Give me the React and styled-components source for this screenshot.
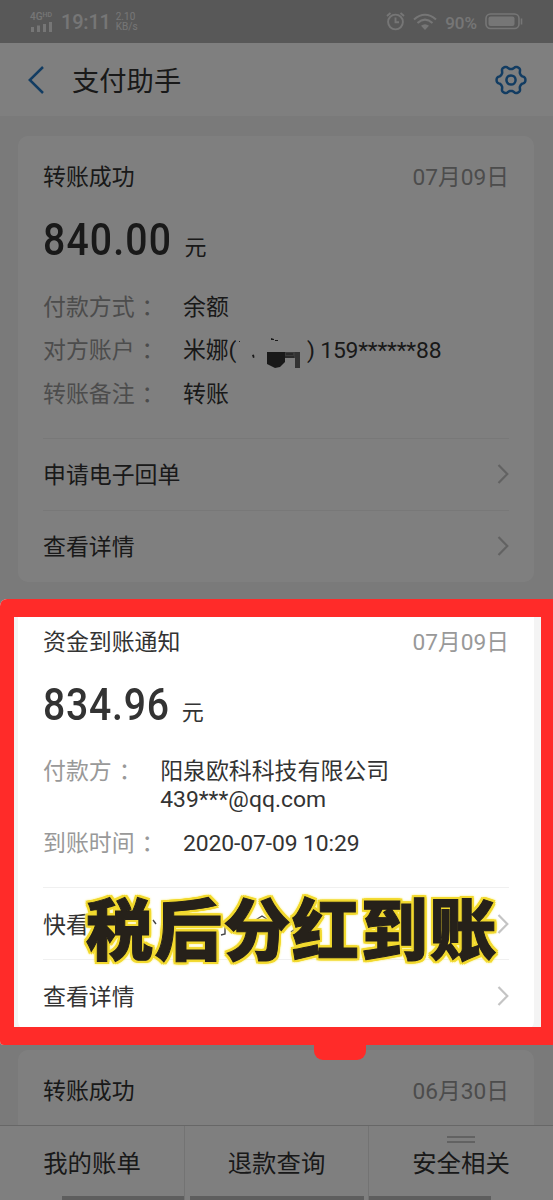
import React from "react";
import styled, { createGlobalStyle } from "styled-components";

const Global = createGlobalStyle`
  * { box-sizing: border-box; }
  body { margin: 0; background: #f4f4f4; }
`;

const Screen = styled.div`
  position: relative;
  width: 553px;
  height: 1200px;
  overflow: hidden;
  display: flex;
  flex-direction: column;
  background: #f4f4f4;
  color: #333;
  font-family: Roboto, "Noto Sans CJK SC", sans-serif;
  font-size: 22.9px;
  line-height: 28px;
`;

const StatusBar = styled.div`
  flex: none;
  height: 43px;
  padding: 0 30px;
  display: flex;
  align-items: center;
  justify-content: space-between;
  background: #b0b0b0;
  color: #ececec;
`;

const StatusGroup = styled.div`
  display: flex;
  align-items: center;
  gap: ${(p) => p.$gap}px;
`;

const Clock = styled.span`
  font-size: 20px;
  font-weight: 500;
  letter-spacing: -0.2px;
  padding-top: 1px;
`;

const Speed = styled.span`
  margin-left: -2px;
  font-size: 10px;
  line-height: 10px;
  white-space: pre;
`;

const Network = styled.span`
  display: flex;
  flex-direction: column;
  gap: 1px;
  font-size: 10px;
  line-height: 9px;
  font-weight: 500;
  sup { font-size: 7px; line-height: 0; vertical-align: 3px; }
`;

const Percent = styled.span`
  font-size: 17px;
  font-weight: 500;
  padding-top: 2px;
`;

const Header = styled.header`
  flex: none;
  height: 73px;
  padding: 0 26px 0 28px;
  display: flex;
  align-items: center;
  background: #fff;
`;

const HeaderTitle = styled.h1`
  flex: 1;
  margin: 0 0 0 28px;
  font-size: 27.3px;
  font-weight: 400;
  padding-top: 4px;
`;

const Feed = styled.main`
  flex: 1;
  min-height: 0;
  overflow: hidden;
  padding: 20px 19px 0 18px;
  display: flex;
  flex-direction: column;
  gap: 19px;
`;

const CardBox = styled.section`
  flex: none;
  min-height: 110px;
  padding: 22px 25px 0;
  background: #fff;
  border-radius: 10px;
`;

const CardHead = styled.div`
  display: flex;
  justify-content: space-between;
  height: 40px;
  line-height: 40px;
`;

const DateText = styled.span`
  color: #999;
  font-size: 22.7px;
`;

const Amount = styled.div`
  display: flex;
  align-items: baseline;
  height: 87px;
  line-height: 85px;
`;

const Figure = styled.span`
  font-size: 43.5px;
  font-weight: 500;
  letter-spacing: ${(p) => p.$tracking}px;
  transform: scaleX(0.9);
  transform-origin: left;
`;

const Unit = styled.span`
  margin-left: -2px;
  font-size: 22px;
`;

const Details = styled.div`
  display: flex;
  flex-direction: column;
  gap: 15.7px;
  padding: 8.5px 0 29.1px;
`;

const Detail = styled.div`
  display: flex;
`;

const Label = styled.span`
  color: #999;
  white-space: nowrap;
`;

const Colon = styled.span`
  display: inline-block;
  width: 48.5px;
  padding-left: 7px;
`;

const Value = styled.span`
  white-space: pre-line;
  display: flex;
  letter-spacing: ${(p) => p.$tracking}px;
`;

const LinkRow = styled.div`
  display: flex;
  align-items: center;
  justify-content: space-between;
  height: 72px;
  border-top: 1px solid #f0f0f0;
`;

const LinkText = styled.span`
  display: flex;
  align-items: center;
  padding-top: 4px;
`;

const TabBar = styled.nav`
  flex: none;
  height: 75px;
  display: grid;
  grid-template-columns: 184px 184px 185px;
  background: #fff;
  border-top: 1px solid #cfcfcf;
`;

const Tab = styled.div`
  position: relative;
  display: flex;
  flex-direction: column;
  align-items: center;
  justify-content: space-between;
  font-size: 24.4px;
  line-height: 75px;
  border-left: ${(p) => (p.$first ? "0" : "1px solid #e6e6e6")};
`;

const TabEdge = styled.div`
  width: ${(p) => p.$width}px;
  height: 4px;
  flex: none;
  align-self: ${(p) => p.$side};
  background: #bdbdbd;
`;

const TabText = styled.span`
  height: 70px;
`;

const Grip = styled.div`
  position: absolute;
  top: 10px;
  left: 78px;
  width: 28px;
  height: 7px;
  border: solid #c4c4c4;
  border-width: 2px 0;
`;

const Highlight = styled.div`
  position: absolute;
  top: 599px;
  left: 0;
  width: 553px;
  height: 446px;
  border: solid #ff2b29;
  border-width: 18px 12px 18px 14px;
  border-radius: 7px 0 0 4px;
  box-shadow: 0 0 0 1300px rgba(0, 0, 0, 0.5);
`;

const HighlightTab = styled.div`
  position: absolute;
  top: 1043px;
  left: 314px;
  width: 52px;
  height: 17px;
  background: #ff2b29;
  border-radius: 2px 2px 9px 9px;
`;

const Caption = styled.div`
  position: absolute;
  top: 878px;
  left: 86px;
  font-family: "Noto Sans CJK SC", sans-serif;
  font-size: 67px;
  line-height: 96px;
  letter-spacing: 1.7px;
  font-weight: 900;
  white-space: nowrap;
  color: #26211a;
  -webkit-text-stroke: 1px #26211a;
  filter: drop-shadow(2px 0 0 #f2d92e) drop-shadow(-2px 0 0 #f2d92e)
    drop-shadow(0 2px 0 #f2d92e) drop-shadow(0 -2px 0 #f2d92e)
    drop-shadow(0 0 1px #fbf07a);
`;

const SmudgeArt = styled.svg`
  overflow: visible;
  margin: 0 1px 0 0;
`;

const Chevron = () => (
  <svg width="12" height="20" viewBox="0 0 12 20" fill="none" stroke="#c4c4c4" strokeWidth="2.2">
    <path d="M1.5 1 L10.3 10 L1.5 19" />
  </svg>
);

const gearPath =
  Array.from({ length: 120 }, (_, i) => {
    const a = (i / 120) * Math.PI * 2;
    const c = Math.cos(6 * a);
    const r = 12.7 + 1.9 * Math.tanh(1.5 * c);
    return `${i ? "L" : "M"}${(16 + r * Math.cos(a)).toFixed(2)} ${(16 + r * Math.sin(a)).toFixed(2)}`;
  }).join(" ") + "Z";

const Gear = () => (
  <svg width="32" height="32" viewBox="0 0 32 32" fill="none" stroke="#2479c4" strokeWidth="2.5" strokeLinejoin="round">
    <path d={gearPath} />
    <circle cx="16" cy="16" r="4.6" />
  </svg>
);

const Smudge = () => (
  <SmudgeArt width="70" height="28" viewBox="0 0 70 28" fill="#333">
    <path d="M3 4h1v1h-1zM16 18l2-.5.5 3-1.5.4zM35 1l3 1v1h-3zM39 3h3v1h-3z" />
    <path d="M31 15H49V25L44 30L39 31L31 27Z" />
    <path d="M49 15h10v6H49z" fill="#777" />
    <path d="M50 17h7M49 20h9" stroke="#333" />
    <path d="M59 15h5v16h-5z" fill="#666" />
  </SmudgeArt>
);

const Remnants = () => (
  <svg width="210" height="28" viewBox="0 0 210 28" fill="none" stroke="#444" strokeWidth="1.4">
    <path d="M64 8l3 4M136 15v7l-4 1M165 9l8-5 8 5M202 20l9-7" />
  </svg>
);

const Card = ({ title, date, amount, tracking, details = [], links = [] }) => (
  <CardBox>
    <CardHead>
      <span>{title}</span>
      <DateText>{date}</DateText>
    </CardHead>
    {amount && (
      <Amount>
        <Figure $tracking={tracking}>{amount}</Figure>
        <Unit>元</Unit>
      </Amount>
    )}
    {details.length > 0 && (
      <Details>
        {details.map(([label, value, valueTracking = 0]) => (
          <Detail key={label}>
            <Label>{label}<Colon>：</Colon></Label>
            <Value $tracking={valueTracking}>{value}</Value>
          </Detail>
        ))}
      </Details>
    )}
    {links.map((link, i) => (
      <LinkRow key={i}>
        <LinkText>{link}</LinkText>
        <Chevron />
      </LinkRow>
    ))}
  </CardBox>
);

export default function App() {
  return (
    <Screen>
      <Global />
      <StatusBar>
        <StatusGroup $gap={7}>
          <Network>
            <span>4G<sup>HD</sup></span>
            <svg width="24" height="10" viewBox="0 0 24 10" fill="#ececec">
              <path d="M1 5h3v5H1zM7 3.5h3V10H7zM13 2h3v8h-3zM19 0h3v10h-3z" />
            </svg>
          </Network>
          <Clock>19:11</Clock>
          <Speed>{"2.10\nKB/s"}</Speed>
        </StatusGroup>
        <StatusGroup $gap={8}>
          <svg width="19" height="19" viewBox="0 0 19 19" fill="none" stroke="#ececec" strokeWidth="1.9">
            <circle cx="9.5" cy="10" r="7.4" />
            <path d="M9.5 5.5V10.3H13M1 4L4.5 1M18 4L14.5 1" />
          </svg>
          <svg width="24" height="18" viewBox="0 0 24 18" fill="none" stroke="#ececec" strokeWidth="2.1">
            <path d="M1 6.5Q12-3 23 6.5M4.5 10Q12 3.3 19.5 10" />
            <path d="M8 12.8Q12 9.5 16 12.8L12 17Z" fill="#ececec" stroke="none" />
          </svg>
          <Percent>90%</Percent>
          <svg width="38" height="17" viewBox="0 0 38 17" fill="none" stroke="#ececec" strokeWidth="1.6">
            <rect x="1" y="1" width="33" height="14.5" rx="4.5" />
            <rect x="3.5" y="3.5" width="26" height="9.5" rx="2" fill="#ececec" stroke="none" />
            <path d="M36.5 5.5v6" />
          </svg>
        </StatusGroup>
      </StatusBar>
      <Header>
        <svg width="16" height="28" viewBox="0 0 16 28" fill="none" stroke="#2479c4" strokeWidth="2.5">
          <path d="M15 1 L1.8 14 L15 27" />
        </svg>
        <HeaderTitle>支付助手</HeaderTitle>
        <Gear />
      </Header>
      <Feed>
        <Card
          title="转账成功"
          date="07月09日"
          amount="840.00"
          tracking={1.3}
          details={[
            ["付款方式", "余额"],
            ["对方账户", <>米娜(<Smudge />) 159******88</>, -0.22],
            ["转账备注", "转账"],
          ]}
          links={["申请电子回单", "查看详情"]}
        />
        <Card
          title="资金到账通知"
          date="07月09日"
          amount="834.96"
          tracking={0.85}
          details={[
            ["付款方", "阳泉欧科科技有限公司\n439***@qq.com"],
            ["到账时间", "2020-07-09 10:29", -0.12],
          ]}
          links={[<>快看<Remnants /></>, "查看详情"]}
        />
        <Card title="转账成功" date="06月30日" />
      </Feed>
      <TabBar>
        <Tab $first><TabText>我的账单</TabText><TabEdge $width={122} $side="flex-end" /></Tab>
        <Tab><TabText>退款查询</TabText><TabEdge $width={174} $side="center" /></Tab>
        <Tab><Grip /><TabText>安全相关</TabText><TabEdge $width={122} $side="flex-start" /></Tab>
      </TabBar>
      <Highlight />
      <HighlightTab />
      <Caption>税后分红到账</Caption>
    </Screen>
  );
}
